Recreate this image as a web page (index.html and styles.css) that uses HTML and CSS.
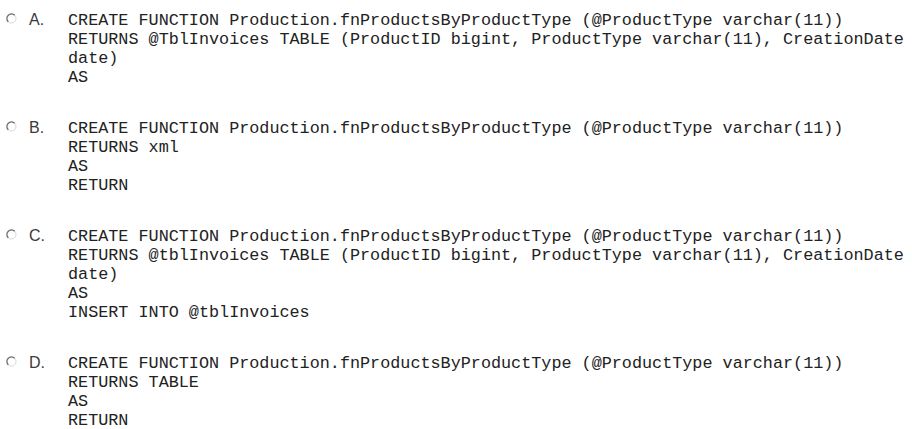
FILE: index.html
```html
<!DOCTYPE html>
<html>
<head>
<meta charset="utf-8">
<link rel="stylesheet" href="styles.css">
</head>
<body>
<div class="options">
  <div class="opt">
    <span class="radio"><svg width="11" height="11" viewBox="0 0 11 11"><circle cx="5.5" cy="5.5" r="4.5" fill="none" stroke="#d8d8d8" stroke-width="1"/><path d="M2.3 8.7 A4.5 4.5 0 0 1 8.7 2.3" fill="none" stroke="#6e6e6e" stroke-width="1.4"/></svg></span>
    <span class="label">A.</span>
    <pre class="code">CREATE FUNCTION Production.fnProductsByProductType (@ProductType varchar(11))
RETURNS @TblInvoices TABLE (ProductID bigint, ProductType varchar(11), CreationDate
date)
AS</pre>
  </div>
  <div class="opt">
    <span class="radio"><svg width="11" height="11" viewBox="0 0 11 11"><circle cx="5.5" cy="5.5" r="4.5" fill="none" stroke="#d8d8d8" stroke-width="1"/><path d="M2.3 8.7 A4.5 4.5 0 0 1 8.7 2.3" fill="none" stroke="#6e6e6e" stroke-width="1.4"/></svg></span>
    <span class="label">B.</span>
    <pre class="code">CREATE FUNCTION Production.fnProductsByProductType (@ProductType varchar(11))
RETURNS xml
AS
RETURN</pre>
  </div>
  <div class="opt">
    <span class="radio"><svg width="11" height="11" viewBox="0 0 11 11"><circle cx="5.5" cy="5.5" r="4.5" fill="none" stroke="#d8d8d8" stroke-width="1"/><path d="M2.3 8.7 A4.5 4.5 0 0 1 8.7 2.3" fill="none" stroke="#6e6e6e" stroke-width="1.4"/></svg></span>
    <span class="label">C.</span>
    <pre class="code">CREATE FUNCTION Production.fnProductsByProductType (@ProductType varchar(11))
RETURNS @tblInvoices TABLE (ProductID bigint, ProductType varchar(11), CreationDate
date)
AS
INSERT INTO @tblInvoices</pre>
  </div>
  <div class="opt">
    <span class="radio"><svg width="11" height="11" viewBox="0 0 11 11"><circle cx="5.5" cy="5.5" r="4.5" fill="none" stroke="#d8d8d8" stroke-width="1"/><path d="M2.3 8.7 A4.5 4.5 0 0 1 8.7 2.3" fill="none" stroke="#6e6e6e" stroke-width="1.4"/></svg></span>
    <span class="label">D.</span>
    <pre class="code">CREATE FUNCTION Production.fnProductsByProductType (@ProductType varchar(11))
RETURNS TABLE
AS
RETURN</pre>
  </div>
</div>
</body>
</html>
```
FILE: styles.css
```css
html, body {
  margin: 0;
  padding: 0;
  background: #ffffff;
}
.options {
  display: flex;
  flex-direction: column;
  gap: 31px;
  padding: 10px 0 0 6px;
}
.opt {
  display: flex;
  align-items: baseline;
}
.radio {
  width: 11px;
  height: 11px;
  align-self: flex-start;
  margin-top: 3px;
  flex: none;
  display: block;
}
.radio svg {
  display: block;
}
.label {
  font-family: "Liberation Sans", Arial, sans-serif;
  font-size: 16px;
  line-height: 19px;
  color: #3a3a3a;
  margin-left: 12px;
  width: 39px;
  flex: none;
}
.code {
  margin: 0;
  font-family: "Liberation Mono", "Courier New", monospace;
  font-size: 16.8px;
  line-height: 19px;
  color: #222;
  white-space: pre;
}
```
